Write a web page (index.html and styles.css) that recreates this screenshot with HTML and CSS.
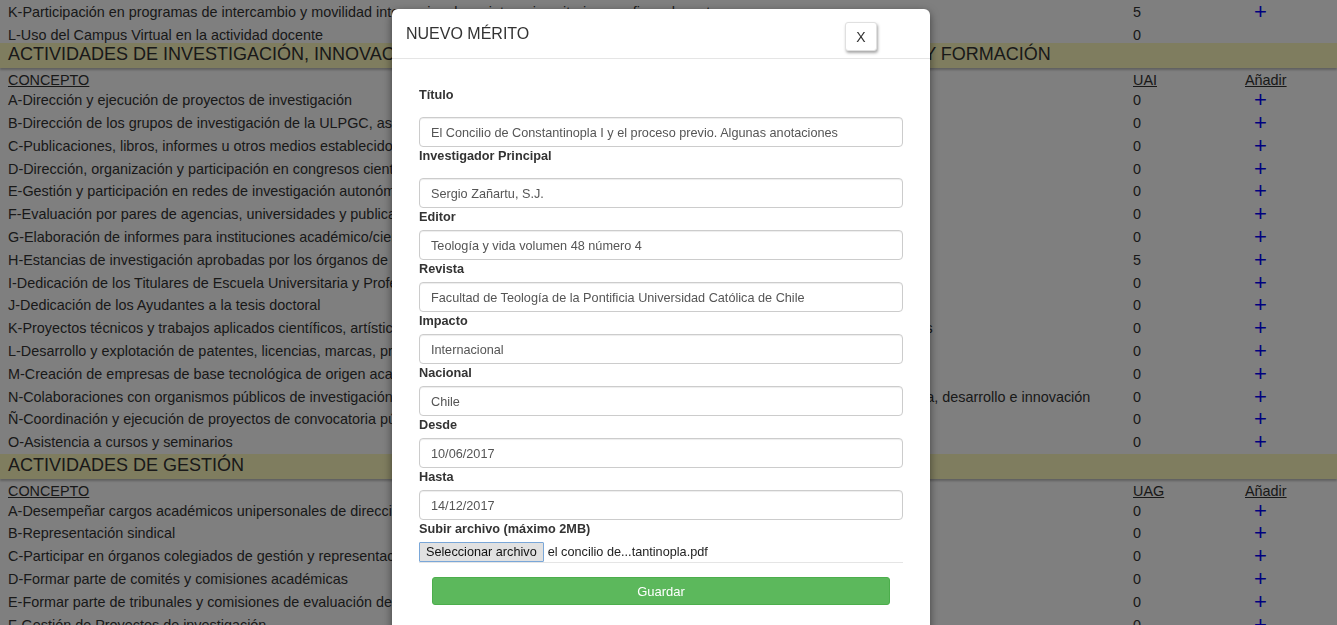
FILE: index.html
```html
<!DOCTYPE html>
<html lang="es">
<head>
<meta charset="utf-8">
<title>Nuevo mérito</title>
<link rel="stylesheet" href="styles.css">
</head>
<body>
<div class="page">
  <div class="row"><span class="concept">K-Participación en programas de intercambio y movilidad internacionales e interuniversitarios con fines docentes</span><span class="val">5</span><span class="add">+</span></div>
  <div class="row plain"><span class="concept">L-Uso del Campus Virtual en la actividad docente</span><span class="val">0</span><span class="add"></span></div>

  <div class="band">ACTIVIDADES DE INVESTIGACIÓN, INNOVACIÓN, TRANSFERENCIAS DEL CONOCIMIENTO, DESARROLLO Y FORMACIÓN</div>
  <div class="row plain"><span class="concept"><u>CONCEPTO</u></span><span class="val"><u>UAI</u></span><span class="addh"><u>Añadir</u></span></div>
  <div class="row"><span class="concept">A-Dirección y ejecución de proyectos de investigación</span><span class="val">0</span><span class="add">+</span></div>
  <div class="row"><span class="concept">B-Dirección de los grupos de investigación de la ULPGC, asociados a institutos</span><span class="val">0</span><span class="add">+</span></div>
  <div class="row"><span class="concept">C-Publicaciones, libros, informes u otros medios establecidos de difusión</span><span class="val">0</span><span class="add">+</span></div>
  <div class="row"><span class="concept">D-Dirección, organización y participación en congresos científicos</span><span class="val">0</span><span class="add">+</span></div>
  <div class="row"><span class="concept">E-Gestión y participación en redes de investigación autonómicas</span><span class="val">0</span><span class="add">+</span></div>
  <div class="row"><span class="concept">F-Evaluación por pares de agencias, universidades y publicaciones</span><span class="val">0</span><span class="add">+</span></div>
  <div class="row"><span class="concept">G-Elaboración de informes para instituciones académico/científicas</span><span class="val">0</span><span class="add">+</span></div>
  <div class="row"><span class="concept">H-Estancias de investigación aprobadas por los órganos de la ULPGC</span><span class="val">5</span><span class="add">+</span></div>
  <div class="row"><span class="concept">I-Dedicación de los Titulares de Escuela Universitaria y Profesores</span><span class="val">0</span><span class="add">+</span></div>
  <div class="row"><span class="concept">J-Dedicación de los Ayudantes a la tesis doctoral</span><span class="val">0</span><span class="add">+</span></div>
  <div class="row"><span class="concept">K-Proyectos técnicos y trabajos aplicados científicos, artísticos y culturales realizados con empresas e instituciones públicas o privadas estatales</span><span class="val">0</span><span class="add">+</span></div>
  <div class="row"><span class="concept">L-Desarrollo y explotación de patentes, licencias, marcas, prototipos</span><span class="val">0</span><span class="add">+</span></div>
  <div class="row"><span class="concept">M-Creación de empresas de base tecnológica de origen académico</span><span class="val">0</span><span class="add">+</span></div>
  <div class="row"><span class="concept">N-Colaboraciones con organismos públicos de investigación y con otras entidades públicas y privadas sobre proyectos de investigación científica, desarrollo e innovación</span><span class="val">0</span><span class="add">+</span></div>
  <div class="row"><span class="concept">Ñ-Coordinación y ejecución de proyectos de convocatoria pública</span><span class="val">0</span><span class="add">+</span></div>
  <div class="row"><span class="concept">O-Asistencia a cursos y seminarios</span><span class="val">0</span><span class="add">+</span></div>

  <div class="band">ACTIVIDADES DE GESTIÓN</div>
  <div class="row plain"><span class="concept"><u>CONCEPTO</u></span><span class="val"><u>UAG</u></span><span class="addh"><u>Añadir</u></span></div>
  <div class="row"><span class="concept">A-Desempeñar cargos académicos unipersonales de dirección</span><span class="val">0</span><span class="add">+</span></div>
  <div class="row"><span class="concept">B-Representación sindical</span><span class="val">0</span><span class="add">+</span></div>
  <div class="row"><span class="concept">C-Participar en órganos colegiados de gestión y representación</span><span class="val">0</span><span class="add">+</span></div>
  <div class="row"><span class="concept">D-Formar parte de comités y comisiones académicas</span><span class="val">0</span><span class="add">+</span></div>
  <div class="row"><span class="concept">E-Formar parte de tribunales y comisiones de evaluación de plazas</span><span class="val">0</span><span class="add">+</span></div>
  <div class="row"><span class="concept">F-Gestión de Proyectos de investigación</span><span class="val">0</span><span class="add">+</span></div>
</div>

<div class="backdrop"></div>

<div class="modal">
  <div class="modal-header">
    <h4 class="modal-title">NUEVO MÉRITO</h4>
    <button class="close-btn" type="button">X</button>
  </div>
  <div class="modal-body">
    <label class="lbl lbl-wide">Título</label>
    <div class="field">El Concilio de Constantinopla I y el proceso previo. Algunas anotaciones</div>
    <label class="lbl lbl-wide">Investigador Principal</label>
    <div class="field">Sergio Zañartu, S.J.</div>
    <label class="lbl">Editor</label>
    <div class="field">Teología y vida volumen 48 número 4</div>
    <label class="lbl">Revista</label>
    <div class="field">Facultad de Teología de la Pontificia Universidad Católica de Chile</div>
    <label class="lbl">Impacto</label>
    <div class="field">Internacional</div>
    <label class="lbl">Nacional</label>
    <div class="field">Chile</div>
    <label class="lbl">Desde</label>
    <div class="field">10/06/2017</div>
    <label class="lbl">Hasta</label>
    <div class="field">14/12/2017</div>
    <label class="lbl">Subir archivo (máximo 2MB)</label>
    <div class="file-row">
      <span class="file-btn">Seleccionar archivo</span>
      <span class="file-name">el concilio de...tantinopla.pdf</span>
    </div>
    <button class="save-btn" type="button">Guardar</button>
  </div>
</div>
</body>
</html>
```

FILE: styles.css
```css
html, body {
  margin: 0;
  padding: 0;
  height: 100%;
  overflow: hidden;
}

body {
  font-family: "Liberation Sans", Arial, sans-serif;
  color: #333;
  background: #fff;
}

.page {
  margin-top: 0;
}

.row {
  display: grid;
  grid-template-columns: 1125px 112px 1fr;
  height: 22.8px;
  box-sizing: border-box;
  padding: 4px 0 0 8px;
  align-items: start;
  font-size: 14.4px;
  line-height: 16px;
  white-space: nowrap;
}

.row.plain {
  height: 20px;
}

.concept {
  overflow: visible;
}

.add {
  color: #0000ff;
  font-size: 22px;
  line-height: 16px;
  padding-left: 9px;
}

.band {
  height: 25px;
  margin-top: 0.5px;
  line-height: 23px;
  padding-left: 8px;
  font-size: 18px;
  background: #fffbbf;
  box-shadow: 0 2px 2px rgba(0, 0, 0, 0.25);
  white-space: nowrap;
  position: relative;
  z-index: 1;
}

.backdrop {
  position: fixed;
  inset: 0;
  background: rgba(0, 0, 0, 0.5);
  z-index: 10;
}

.modal {
  position: absolute;
  left: 392px;
  top: 9px;
  width: 538px;
  height: 640px;
  background: #fff;
  border-radius: 6px;
  box-shadow: 0 3px 9px rgba(0, 0, 0, 0.5);
  z-index: 20;
}

.modal-header {
  height: 50px;
  box-sizing: border-box;
  border-bottom: 1px solid #e5e5e5;
  display: flex;
  align-items: flex-start;
  padding: 0 53px 0 14px;
}

.modal-title {
  margin: 16px 0 0 0;
  font-size: 16px;
  font-weight: normal;
  line-height: 18px;
  flex: 1;
  color: #333;
}

.close-btn {
  margin-top: 13px;
  width: 32px;
  height: 29px;
  padding: 0;
  background: #fff;
  border: 1px solid #e0e0e0;
  border-radius: 3px;
  box-shadow: 1px 2px 3px rgba(0, 0, 0, 0.35);
  font-family: "Liberation Sans", Arial, sans-serif;
  font-size: 14px;
  color: #333;
}

.modal-body {
  padding: 27px 27px 0 27px;
  display: flex;
  flex-direction: column;
}

.lbl {
  display: block;
  font-size: 12.7px;
  font-weight: bold;
  line-height: 15px;
  padding-top: 2px;
  margin-bottom: 5px;
  color: #333;
}

.lbl-wide {
  margin-bottom: 14px;
}

.field {
  height: 30px;
  box-sizing: border-box;
  border: 1px solid #ccc;
  border-radius: 4px;
  box-shadow: inset 0 1px 1px rgba(0, 0, 0, 0.075);
  padding: 2px 11px 0 11px;
  font-size: 12.7px;
  line-height: 27px;
  color: #555;
  white-space: nowrap;
  overflow: hidden;
}

.file-row {
  display: flex;
  align-items: center;
  gap: 4px;
  height: 21px;
  border-bottom: 1px solid #e5e5e5;
  box-sizing: border-box;
  font-size: 12.7px;
  color: #222;
}

.file-btn {
  height: 20px;
  box-sizing: border-box;
  padding: 0 6px;
  line-height: 18px;
  background: #e1e1e1;
  border: 1px solid #7aa7d8;
  border-radius: 1px;
  font-size: 12.7px;
  color: #111;
  align-self: flex-start;
}

.file-name {
  line-height: 18px;
}

.save-btn {
  margin: 14px 13px 0 13px;
  height: 28px;
  background: #5cb85c;
  border: 1px solid #4cae4c;
  border-radius: 3px;
  color: #fff;
  font-family: "Liberation Sans", Arial, sans-serif;
  font-size: 13px;
}
```
